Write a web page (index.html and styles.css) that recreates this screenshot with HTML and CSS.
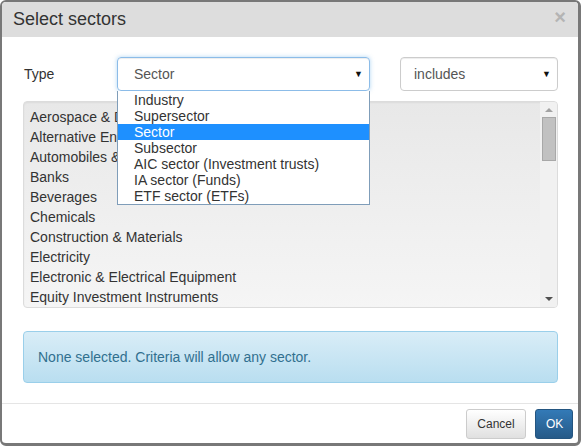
FILE: index.html
```html
<!DOCTYPE html>
<html lang="en">
<head>
  <meta charset="UTF-8" />
  <title>Select sectors</title>
  <link rel="stylesheet" href="styles.css">
</head>
<body>
  <div class="modal">
    <div class="modal-header">
      <h4 class="modal-title">Select sectors</h4>
      <span class="close">&times;</span>
    </div>
    <div class="modal-body">
      <div class="type-row">
        <label class="type-label">Type</label>
        <div class="select-wrap">
          <div class="fake-select focused">
            <span>Sector</span>
            <span class="caret">&#9660;</span>
          </div>
          <ul class="dropdown">
            <li>Industry</li>
            <li>Supersector</li>
            <li class="active">Sector</li>
            <li>Subsector</li>
            <li>AIC sector (Investment trusts)</li>
            <li>IA sector (Funds)</li>
            <li>ETF sector (ETFs)</li>
          </ul>
        </div>
        <div class="fake-select small">
          <span>includes</span>
          <span class="caret">&#9660;</span>
        </div>
      </div>

      <div class="listbox">
        <ul class="options">
          <li>Aerospace &amp; Defense</li>
          <li>Alternative Energy</li>
          <li>Automobiles &amp; Parts</li>
          <li>Banks</li>
          <li>Beverages</li>
          <li>Chemicals</li>
          <li>Construction &amp; Materials</li>
          <li>Electricity</li>
          <li>Electronic &amp; Electrical Equipment</li>
          <li>Equity Investment Instruments</li>
        </ul>
        <div class="scrollbar">
          <span class="arrow up"></span>
          <span class="thumb"></span>
          <span class="arrow down"></span>
        </div>
      </div>

      <div class="alert">None selected. Criteria will allow any sector.</div>
    </div>
    <div class="modal-footer">
      <button class="btn btn-default">Cancel</button>
      <button class="btn btn-primary">OK</button>
    </div>
  </div>
</body>
</html>
```

FILE: styles.css
```css
* {
  box-sizing: border-box;
}

body {
  margin: 0;
  font-family: 'Liberation Sans', Arial, sans-serif;
  color: #333;
  background: #fff;
}

.modal {
  width: 581px;
  height: 446px;
  border: 2px solid #787878;
  border-right-width: 3px;
  border-bottom-width: 3px;
  border-radius: 6px;
  overflow: hidden;
  display: flex;
  flex-direction: column;
  background: #fff;
}

.modal-header {
  height: 35px;
  background: #dddddd;
  display: flex;
  align-items: center;
  justify-content: space-between;
  padding: 0 12px 0 11px;
}

.modal-title {
  margin: 0;
  font-size: 18px;
  font-weight: normal;
  color: #333;
}

.close {
  font-size: 20px;
  font-weight: bold;
  color: #b4b4b4;
  line-height: 1;
  margin-top: -6px;
}

.modal-body {
  padding: 20px 20px 20px 21px;
  display: flex;
  flex-direction: column;
}

.type-row {
  display: flex;
  align-items: center;
  height: 34px;
}

.type-label {
  width: 94px;
  padding-left: 1px;
  font-size: 14px;
  color: #333;
}

.select-wrap {
  position: relative;
  width: 253px;
  margin-right: 30px;
}

.fake-select {
  height: 34px;
  border: 1px solid #ccc;
  border-radius: 4px;
  display: flex;
  align-items: center;
  justify-content: space-between;
  padding: 0 6px 0 16px;
  font-size: 14px;
  color: #555;
  box-shadow: inset 0 1px 1px rgba(0, 0, 0, 0.075);
}

.fake-select.focused {
  border-color: #8cbce8;
  box-shadow: inset 0 1px 1px rgba(0, 0, 0, 0.075), 0 0 4px rgba(102, 175, 233, 0.5);
}

.fake-select.small {
  width: 158px;
  padding-left: 13px;
}

.caret {
  font-size: 9px;
  color: #111;
}

.dropdown {
  position: absolute;
  top: 34px;
  left: 0;
  width: 253px;
  margin: 0;
  padding: 1px 0 0;
  list-style: none;
  background: #fff;
  border: 1px solid #7f9db9;
  border-top: none;
  z-index: 2;
  font-size: 14px;
  color: #333;
}

.dropdown li {
  height: 16px;
  line-height: 16px;
  padding-left: 16px;
  white-space: nowrap;
}

.dropdown li.active {
  background: #1e90ff;
  color: #fff;
}

.listbox {
  margin-top: 10px;
  height: 207px;
  border: 1px solid #dcdcdc;
  border-radius: 4px;
  background: linear-gradient(#e8e8e8, #f5f5f5);
  box-shadow: inset 0 1px 2px rgba(0, 0, 0, 0.06);
  display: flex;
  overflow: hidden;
}

.options {
  flex: 1;
  margin: 0;
  padding: 5px 0 0 6px;
  list-style: none;
  font-size: 14px;
  color: #333;
  overflow: hidden;
}

.options li {
  height: 20px;
  line-height: 20px;
  white-space: nowrap;
}

.scrollbar {
  width: 17px;
  background: #f1f1f1;
  display: flex;
  flex-direction: column;
  align-items: center;
}

.arrow {
  width: 0;
  height: 0;
  border-left: 4px solid transparent;
  border-right: 4px solid transparent;
}

.arrow.up {
  margin-top: 6px;
  border-bottom: 4px solid #a3a3a3;
}

.arrow.down {
  margin-top: auto;
  margin-bottom: 6px;
  border-top: 4px solid #505050;
}

.thumb {
  margin-top: 5px;
  width: 14px;
  height: 44px;
  background: #c1c1c1;
  border: 1px solid #a8a8a8;
}

.alert {
  margin-top: 23px;
  height: 52px;
  border: 1px solid #9acfea;
  border-radius: 4px;
  background: linear-gradient(#d9edf7, #b9def0);
  color: #31708f;
  font-size: 14px;
  display: flex;
  align-items: center;
  padding-left: 14px;
}

.modal-footer {
  border-top: 1px solid #e5e5e5;
  flex: 1;
  display: flex;
  justify-content: flex-end;
  align-items: flex-start;
  gap: 9px;
  padding: 5px 5px 0 0;
}

.btn {
  height: 30px;
  border-radius: 3px;
  font-family: 'Liberation Sans', Arial, sans-serif;
  font-size: 12px;
  padding: 0 10px;
  cursor: pointer;
}

.btn-default {
  width: 60px;
  color: #333;
  background: linear-gradient(#ffffff, #e0e0e0);
  border: 1px solid #ccc;
}

.btn-primary {
  width: 38px;
  color: #fff;
  background: linear-gradient(#337ab7, #265a88);
  border: 1px solid #245580;
}
```
